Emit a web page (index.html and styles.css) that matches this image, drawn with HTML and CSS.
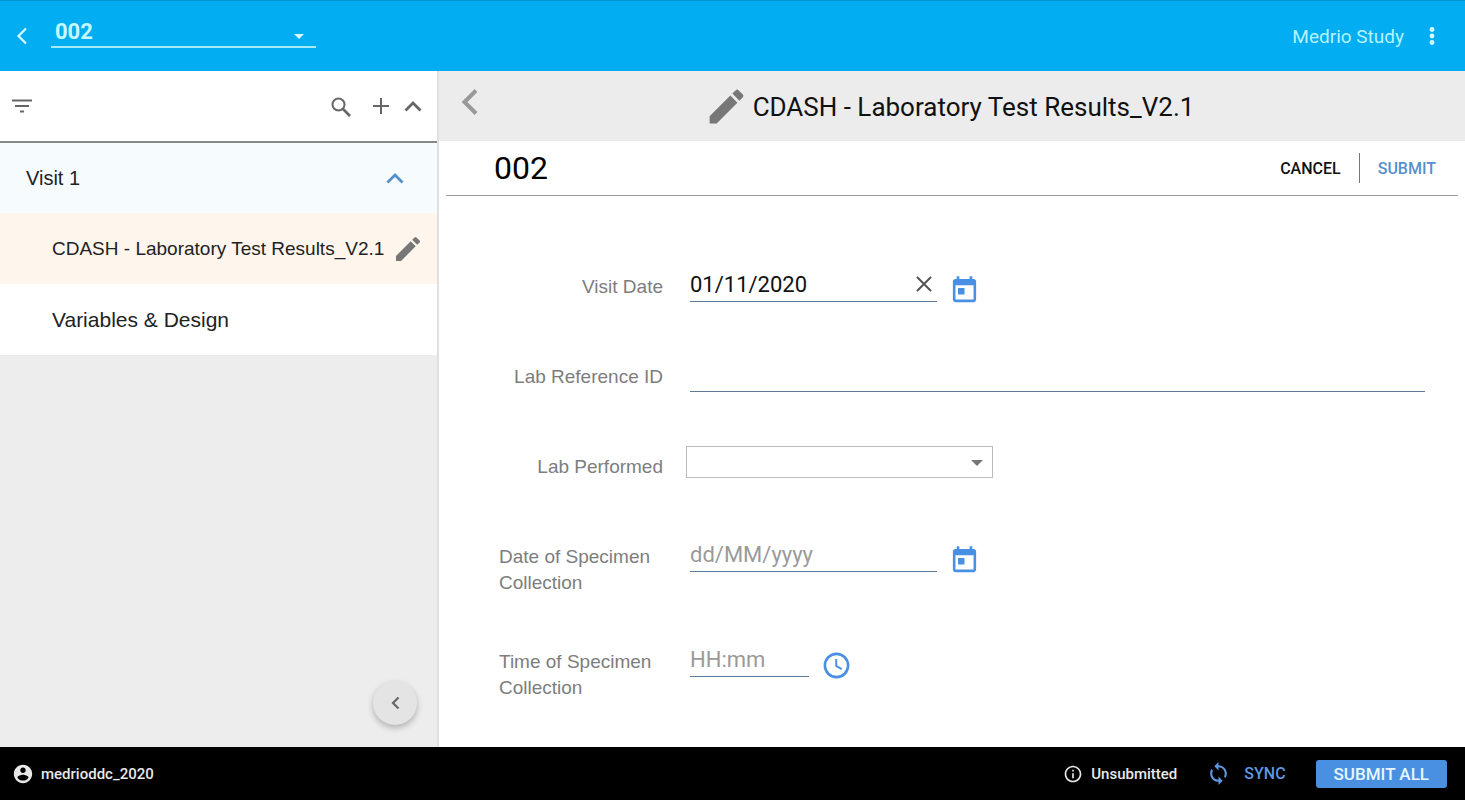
FILE: index.html
```html
<!DOCTYPE html>
<html lang="en">
<head>
    <meta charset="UTF-8">
    <meta name="viewport" content="width=device-width, initial-scale=1.0">
    <title>Medrio Study</title>
    <link rel="stylesheet" href="styles.css">
</head>
<body>
    <header class="topbar">
        <button type="button" class="icon-btn" aria-label="Back">
            <svg width="12" height="18" viewBox="0 0 12 18"><path d="M10 1.500L2.500 9l7.500 7.500" fill="none" stroke="currentColor" stroke-width="2.200"/></svg>
        </button>
        <div class="subject-picker">
            <select class="subject-select" aria-label="Subject">
                <option>002</option>
            </select>
            <svg class="caret" width="10" height="5" viewBox="0 0 10 5"><path d="M0 0h10L5 5z" fill="currentColor"/></svg>
        </div>
        <span class="study-name">Medrio Study</span>
        <button type="button" class="icon-btn" aria-label="More options">
            <svg width="6" height="20" viewBox="0 0 6 20" fill="currentColor"><circle cx="3" cy="3.500" r="2.400"/><circle cx="3" cy="10" r="2.400"/><circle cx="3" cy="16.500" r="2.400"/></svg>
        </button>
    </header>

    <div class="main">
        <aside class="sidebar">
            <div class="toolbar">
                <button type="button" class="icon-btn filter" aria-label="Filter">
                    <svg width="20" height="14" viewBox="0 0 20 14" fill="none" stroke="currentColor" stroke-width="2"><path d="M0 1.500h20M3 7h14M8 12.500h4"/></svg>
                </button>
                <button type="button" class="icon-btn search" aria-label="Search">
                    <svg width="20" height="22" viewBox="0 0 20 22" fill="none" stroke="currentColor"><circle cx="7.500" cy="9.500" r="6" stroke-width="2"/><path d="M12 14l7 7" stroke-width="2.600"/></svg>
                </button>
                <button type="button" class="icon-btn add" aria-label="Add">
                    <svg width="16" height="16" viewBox="0 0 16 16" fill="none" stroke="currentColor" stroke-width="2"><path d="M8 0v16M0 8h16"/></svg>
                </button>
                <button type="button" class="icon-btn" aria-label="Collapse all">
                    <svg width="18" height="12" viewBox="0 0 18 12" fill="none" stroke="currentColor" stroke-width="2.800"><path d="M1.500 10.500L9 3l7.500 7.500"/></svg>
                </button>
            </div>
            <nav>
                <button type="button" class="visit" aria-expanded="true">
                    <span>Visit 1</span>
                    <svg width="18" height="12" viewBox="0 0 18 12" fill="none" stroke="currentColor" stroke-width="2.800"><path d="M1.500 10.500L9 3l7.500 7.500"/></svg>
                </button>
                <a href="#" class="form-link active">
                    <span>CDASH - Laboratory Test Results_V2.1</span>
                    <svg class="pencil" width="32" height="32" viewBox="0 0 24 24" fill="currentColor"><path d="M3 17.250V21h3.750L17.810 9.940l-3.750-3.750L3 17.250zM20.710 7.040a1 1 0 0 0 0-1.410l-2.340-2.340a1 1 0 0 0-1.410 0l-1.830 1.830 3.750 3.750 1.830-1.830z"/></svg>
                </a>
                <a href="#" class="form-link">
                    <span>Variables &amp; Design</span>
                </a>
            </nav>
            <button type="button" class="collapse-btn" aria-label="Hide sidebar">
                <svg width="9" height="14" viewBox="0 0 9 14" fill="none" stroke="currentColor" stroke-width="2.200"><path d="M7.500 1.500L2 7l5.500 5.500"/></svg>
            </button>
        </aside>

        <main class="content">
            <div class="title-bar">
                <button type="button" class="icon-btn" aria-label="Previous">
                    <svg width="17" height="26" viewBox="0 0 17 26" fill="none" stroke="currentColor" stroke-width="4"><path d="M15 1.500L3.500 13 15 24.500"/></svg>
                </button>
                <div class="title">
                    <svg width="45" height="45" viewBox="0 0 24 24" fill="currentColor"><path d="M3 17.250V21h3.750L17.810 9.940l-3.750-3.750L3 17.250zM20.710 7.040a1 1 0 0 0 0-1.410l-2.340-2.340a1 1 0 0 0-1.410 0l-1.830 1.830 3.750 3.750 1.830-1.830z"/></svg>
                    <h1>CDASH - Laboratory Test Results_V2.1</h1>
                </div>
            </div>

            <div class="subject-bar">
                <h2>002</h2>
                <button type="button" class="text-btn">CANCEL</button>
                <button type="submit" form="labForm" class="text-btn submit">SUBMIT</button>
            </div>

            <form id="labForm" class="lab-form">
                <div class="row">
                    <label for="visitDate">Visit Date</label>
                    <div class="field">
                        <div class="clearable">
                            <input type="text" id="visitDate" class="date" value="01/11/2020">
                            <button type="button" class="icon-btn clear" aria-label="Clear date">
                                <svg width="16" height="16" viewBox="0 0 16 16" fill="none" stroke="currentColor" stroke-width="2"><path d="M1 1l14 14M15 1L1 15"/></svg>
                            </button>
                        </div>
                        <button type="button" class="icon-btn picker" aria-label="Pick visit date">
                            <svg width="31" height="31" viewBox="0 0 24 24" fill="currentColor"><path d="M19 3h-1V1h-2v2H8V1H6v2H5c-1.110 0-1.990.900-1.990 2L3 19c0 1.100.890 2 2 2h14c1.100 0 2-.900 2-2V5c0-1.100-.900-2-2-2zm0 16H5V8h14v11zM7 10h5v5H7z"/></svg>
                        </button>
                    </div>
                </div>
                <div class="row">
                    <label for="labRef">Lab Reference ID</label>
                    <div class="field">
                        <input type="text" id="labRef" class="wide">
                    </div>
                </div>
                <div class="row">
                    <label for="labPerformed">Lab Performed</label>
                    <div class="field">
                        <div class="dropdown">
                            <select id="labPerformed">
                                <option></option>
                            </select>
                            <svg class="caret" width="12" height="6" viewBox="0 0 12 6"><path d="M0 0h12L6 6z" fill="currentColor"/></svg>
                        </div>
                    </div>
                </div>
                <div class="row">
                    <label for="specimenDate">Date of Specimen Collection</label>
                    <div class="field">
                        <input type="text" id="specimenDate" class="date" placeholder="dd/MM/yyyy">
                        <button type="button" class="icon-btn picker" aria-label="Pick collection date">
                            <svg width="31" height="31" viewBox="0 0 24 24" fill="currentColor"><path d="M19 3h-1V1h-2v2H8V1H6v2H5c-1.110 0-1.990.900-1.990 2L3 19c0 1.100.890 2 2 2h14c1.100 0 2-.900 2-2V5c0-1.100-.900-2-2-2zm0 16H5V8h14v11zM7 10h5v5H7z"/></svg>
                        </button>
                    </div>
                </div>
                <div class="row">
                    <label for="specimenTime">Time of Specimen Collection</label>
                    <div class="field">
                        <input type="text" id="specimenTime" class="time" placeholder="HH:mm">
                        <button type="button" class="icon-btn picker" aria-label="Pick collection time">
                            <svg width="31" height="31" viewBox="0 0 24 24" fill="none" stroke="currentColor"><circle cx="12" cy="12" r="9" stroke-width="2"/><path d="M11.800 7v5.300l4.200 2.500" stroke-width="1.500"/></svg>
                        </button>
                    </div>
                </div>
            </form>
        </main>
    </div>

    <footer class="statusbar">
        <svg width="22" height="22" viewBox="0 0 24 24" fill="currentColor"><path d="M12 2C6.480 2 2 6.480 2 12s4.480 10 10 10 10-4.480 10-10S17.520 2 12 2zm0 3c1.660 0 3 1.340 3 3s-1.340 3-3 3-3-1.340-3-3 1.340-3 3-3zm0 14.200c-2.500 0-4.710-1.280-6-3.220.030-1.990 4-3.080 6-3.080 1.990 0 5.970 1.090 6 3.080-1.290 1.940-3.500 3.220-6 3.220z"/></svg>
        <span class="user">medrioddc_2020</span>
        <svg width="20" height="20" viewBox="0 0 24 24" fill="currentColor"><path d="M11 7h2v2h-2zm0 4h2v6h-2zm1-9C6.480 2 2 6.480 2 12s4.480 10 10 10 10-4.480 10-10S17.520 2 12 2zm0 18c-4.410 0-8-3.590-8-8s3.590-8 8-8 8 3.590 8 8-3.590 8-8 8z"/></svg>
        <span class="status">Unsubmitted</span>
        <button type="button" class="sync">
            <svg width="25" height="25" viewBox="0 0 24 24" fill="currentColor"><path d="M12 4V1L8 5l4 4V6c3.310 0 6 2.690 6 6 0 1.010-.250 1.970-.700 2.800l1.460 1.460C19.540 15.030 20 13.570 20 12c0-4.420-3.580-8-8-8zm0 14c-3.310 0-6-2.690-6-6 0-1.010.250-1.970.700-2.800L5.240 7.740C4.460 8.970 4 10.430 4 12c0 4.420 3.580 8 8 8v3l4-4-4-4v3z"/></svg>
            SYNC
        </button>
        <button type="button" class="submit-all">SUBMIT ALL</button>
    </footer>
</body>
</html>
```
FILE: styles.css
```css
* {
    box-sizing: border-box;
}
body {
    display: flex;
    flex-direction: column;
    min-height: 100vh;
    margin: 0;
    font-family: Roboto, sans-serif;
    color: #111;
    background: white;
}
button, input, select {
    font-family: inherit;
    margin: 0;
}
button {
    cursor: pointer;
}
svg {
    display: block;
    flex-shrink: 0;
}
h1, h2 {
    margin: 0;
    font-weight: normal;
}
.icon-btn {
    display: block;
    padding: 0;
    border: none;
    background: none;
    color: inherit;
}

/* top bar */
.topbar {
    display: flex;
    align-items: center;
    height: 71px;
    padding: 0 30px 0 16px;
    border-top: 1px solid #0593d0;
    background-color: #03adf1;
    color: #d8fbff;
}
.subject-picker {
    position: relative;
    width: 265px;
    margin: 0 auto 12px 23px;
}
.subject-select {
    appearance: none;
    display: block;
    width: 100%;
    height: 36px;
    padding: 4px 4px 0;
    border: none;
    border-bottom: 2px solid #a5ebff;
    background: none;
    color: #c8f8ff;
    font-size: 22px;
    font-weight: bold;
}
.caret {
    position: absolute;
    right: 12px;
    top: 50%;
    pointer-events: none;
}
.topbar .caret {
    top: 22px;
}
.study-name {
    margin-right: 25px;
    font-size: 19px;
    color: #b4f4ff;
}

.main {
    display: flex;
    flex: 1;
}

/* sidebar */
.sidebar {
    display: flex;
    flex-direction: column;
    flex: 0 0 439px;
    border-right: 2px solid #e0e0e0;
    background-color: #ededed;
    font-family: "Liberation Sans", Arial, sans-serif;
}
.toolbar {
    display: flex;
    align-items: center;
    height: 72px;
    padding: 0 15px 0 12px;
    border-bottom: 2px solid #858a88;
    background: white;
    color: #666;
}
.filter {
    margin-right: auto;
}
.search {
    margin-right: 22px;
}
.add {
    margin-right: 15px;
}
.visit, .form-link {
    display: flex;
    align-items: center;
    justify-content: space-between;
    width: 100%;
    border: none;
    background: white;
    color: #222;
    text-decoration: none;
}
.visit {
    height: 70px;
    padding: 0 33px 0 26px;
    background-color: #f6fbfe;
    font-size: 20px;
}
.visit svg {
    color: #5490c8;
}
.form-link {
    height: 71px;
    padding: 0 13px 0 52px;
    font-size: 21px;
}
.form-link.active {
    background-color: #fef6ec;
    font-size: 19px;
}
.pencil {
    color: #777;
}
.collapse-btn {
    display: flex;
    align-items: center;
    justify-content: center;
    align-self: flex-end;
    width: 44px;
    height: 44px;
    margin: auto 20px 22px 0;
    padding: 0;
    border: none;
    border-radius: 50%;
    background-color: #e4e4e4;
    color: #666;
    box-shadow: 0 3px 6px rgba(0, 0, 0, 0.25);
}

/* form panel */
.content {
    flex: 1;
    min-width: 0;
}
.title-bar {
    display: grid;
    grid-template-columns: 1fr auto 1fr;
    align-items: center;
    height: 70px;
    padding: 0 28px 0 22px;
    background-color: #ececec;
}
.title-bar .icon-btn {
    justify-self: start;
    margin-bottom: 8px;
    color: #999;
}
.title {
    display: flex;
    align-items: center;
    gap: 4px;
    color: #777;
}
.title h1 {
    padding-top: 2px;
    font-size: 26px;
    color: #111;
}
.subject-bar {
    display: flex;
    align-items: center;
    height: 55px;
    margin: 0 7px;
    padding: 0 4px 0 48px;
    border-bottom: 1px solid #999;
}
.subject-bar h2 {
    margin-right: auto;
    font-size: 32px;
    color: black;
}
.text-btn {
    height: 30px;
    padding: 0 18px;
    border: none;
    background: none;
    color: #111;
    font-size: 16px;
    font-weight: 500;
}
.text-btn.submit {
    border-left: 1px solid #777;
    color: #5590cc;
}
.lab-form {
    display: grid;
    gap: 45px;
    padding: 70px 40px 40px 60px;
}
.row {
    display: grid;
    grid-template-columns: 164px 1fr;
    column-gap: 27px;
    align-items: start;
    min-height: 45px;
}
.row label {
    justify-self: end;
    padding-top: 8px;
    font-family: "Liberation Sans", Arial, sans-serif;
    font-size: 19px;
    line-height: 26px;
    color: #7d7d7d;
}
.field {
    display: flex;
    align-items: flex-start;
    gap: 12px;
}
.field input {
    height: 36px;
    padding: 2px 0 0;
    border: none;
    border-bottom: 1px solid #5f7896;
    background: none;
    color: #111;
    font-size: 22px;
}
.field input::placeholder {
    color: #9a9a9a;
}
.field .date {
    width: 247px;
}
.field .time {
    width: 119px;
}
.field .wide {
    width: 100%;
}
.clearable, .dropdown {
    position: relative;
}
.clear {
    position: absolute;
    right: 5px;
    top: 10px;
    color: #555;
}
.picker {
    margin-top: 9px;
    color: #4a90e2;
}
.dropdown {
    margin-left: -4px;
    color: #777;
}
.dropdown select {
    appearance: none;
    display: block;
    width: 307px;
    height: 32px;
    padding: 0 12px;
    border: 1px solid #bbb;
    background: white;
    font-size: 19px;
}
.dropdown .caret {
    right: 10px;
    top: 14px;
}

/* bottom bar */
.statusbar {
    display: flex;
    align-items: center;
    height: 53px;
    padding: 0 18px 0 12px;
    background: black;
    color: #e8e8e8;
    font-size: 15px;
    font-weight: 500;
}
.user {
    margin: 0 auto 0 7px;
}
.status {
    margin: 0 29px 0 8px;
}
.sync {
    display: flex;
    align-items: center;
    gap: 13px;
    margin-right: 30px;
    padding: 0;
    border: none;
    background: none;
    color: #5f97e0;
    font-size: 16px;
    font-weight: 500;
}
.submit-all {
    height: 28px;
    padding: 0 18px;
    border: none;
    border-radius: 3px;
    background-color: #4a90e2;
    color: #e6f8ff;
    font-size: 17px;
    font-weight: 500;
}
```
